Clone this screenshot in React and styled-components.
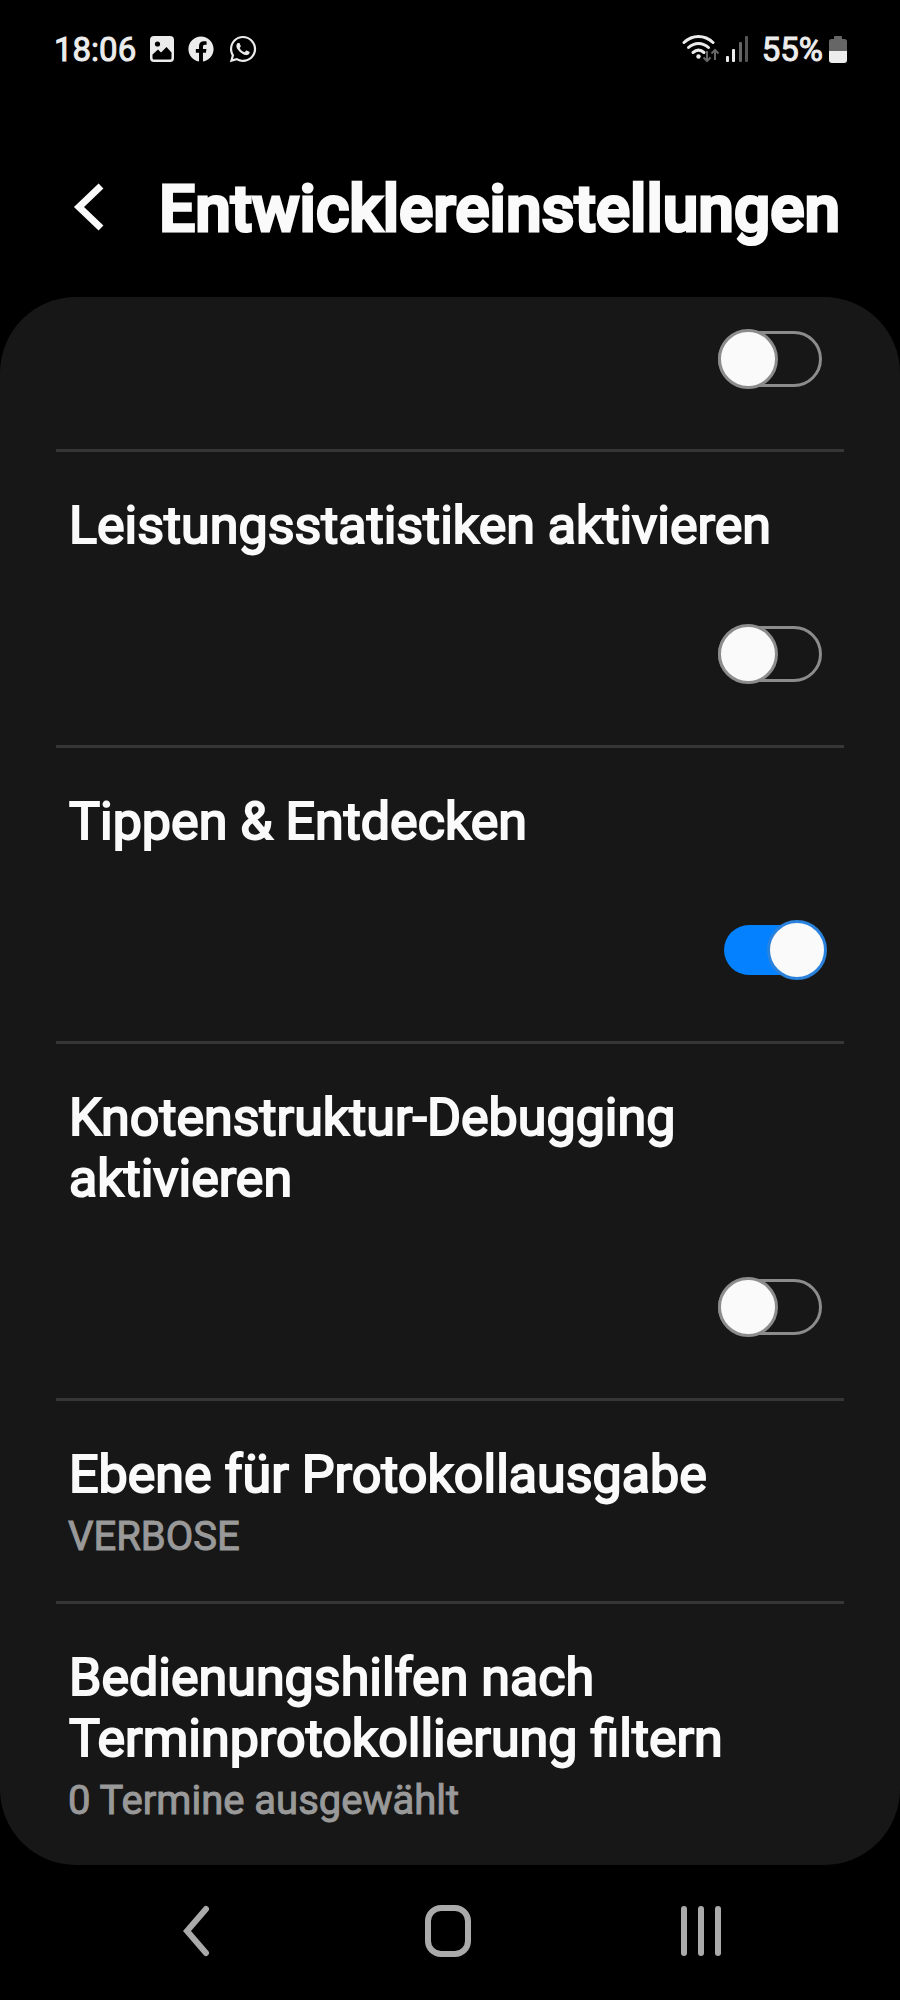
import React, { useState } from "react";
import styled, { createGlobalStyle } from "styled-components";
import { FaFacebook, FaWhatsapp } from "react-icons/fa";

const GlobalStyle = createGlobalStyle`
  *,
  *::before,
  *::after {
    box-sizing: border-box;
  }
  body {
    margin: 0;
    background-color: #000;
    color: #fafafa;
    font-family: Roboto, "Liberation Sans", sans-serif;
  }
`;
const Page = styled.div`
  min-height: 100vh;
  display: flex;
  flex-direction: column;
`;
const StatusBar = styled.div`
  display: flex;
  justify-content: space-between;
  align-items: center;
  height: 98px;
  padding: 0 53px 0 54px;
  color: #ececec;
  font-size: 33px;
  -webkit-text-stroke: 1px #ececec;
`;
const StatusGroup = styled.div`
  display: flex;
  align-items: center;
  gap: ${(props) => props.$gap}px;
  svg {
    flex: none;
  }
`;
const Header = styled.header`
  display: flex;
  align-items: center;
  gap: 53px;
  height: 199px;
  padding: 20px 56px 0 72px;
  h1 {
    margin: 4px 0 0;
    font-size: 64px;
    font-weight: 500;
    line-height: 78px;
    -webkit-text-stroke: 3px #fafafa;
  }
`;
const IconButton = styled.button`
  display: flex;
  padding: 0;
  border: none;
  background: none;
  color: inherit;
  cursor: pointer;
`;
const Card = styled.main`
  padding: 0 56px;
  background-color: #171717;
  border-radius: 76px;
  overflow: hidden;
`;
const Row = styled.div`
  display: flex;
  flex-direction: column;
  padding: ${(props) => (props.$cut ? "32px 12px 60px" : "43px 12px 61px")};
  border-bottom: 3px solid #363636;
`;
const LinkRow = styled.button`
  display: block;
  width: 100%;
  padding: 43px 12px 41px;
  border: none;
  border-bottom: 3px solid #363636;
  background: none;
  color: inherit;
  font-family: inherit;
  text-align: left;
  cursor: pointer;
  &:last-child {
    border-bottom: none;
  }
`;
const titleStyle = `
  display: block;
  padding-left: 1px;
  font-size: 52px;
  font-weight: 400;
  line-height: 61px;
  -webkit-text-stroke: 2px #fafafa;
`;
const Label = styled.label`
  ${titleStyle}
  margin-bottom: 68px;
`;
const Title = styled.span`
  ${titleStyle}
`;
const Summary = styled.span`
  display: block;
  margin-top: 8px;
  color: #999;
  font-size: 40px;
  line-height: 47px;
  -webkit-text-stroke: 1px #999;
`;
const Switch = styled.input`
  appearance: none;
  position: relative;
  align-self: flex-end;
  width: 109px;
  height: 60px;
  margin: 0 5px 0 0;
  padding: 2px 5px 2px 0;
  cursor: pointer;
  &::before {
    content: "";
    display: block;
    height: 56px;
    border: 3px solid #8c8c8c;
    border-radius: 28px;
  }
  &::after {
    content: "";
    position: absolute;
    top: 0;
    left: 0;
    width: 60px;
    height: 60px;
    border: 3px solid #8c8c8c;
    border-radius: 50%;
    background-color: #fafafa;
  }
  &:checked {
    padding: 5px 3px 5px 6px;
  }
  &:checked::before {
    height: 50px;
    border: none;
    background-color: #0381fe;
  }
  &:checked::after {
    left: auto;
    right: 0;
    border-color: #2a82dc;
  }
`;
const NavBar = styled.nav`
  display: grid;
  grid-template-columns: repeat(3, 1fr);
  justify-items: center;
  align-items: center;
  flex: 1;
  padding: 0 73px 4px 69px;
  color: #aaa;
`;

const switches = [
  { id: "stats", text: "Leistungsstatistiken aktivieren" },
  { id: "explore", text: "Tippen & Entdecken" },
  { id: "nodes", text: "Knotenstruktur-Debugging aktivieren" },
];

const PictureIcon = () => (
  <svg width="24" height="26" viewBox="0 0 24 26">
    <rect width="24" height="26" rx="4" fill="currentColor" />
    <circle cx="7.5" cy="8" r="2.6" fill="#000" />
    <path
      d="M2.5 18.5L8 13.5l3 3 5.5-5.5 5 5.5V22a1.5 1.5 0 0 1-1.5 1.5H4A1.5 1.5 0 0 1 2.5 22z"
      fill="#000"
    />
  </svg>
);

const WifiIcon = () => (
  <svg width="38" height="30" viewBox="0 0 38 30" fill="none">
    <g stroke="currentColor" strokeWidth="3" strokeLinecap="round">
      <path d="M2 8.5C10.5 .5 22.5 .5 31 8.5" />
      <path d="M6.5 13.5c6-5.5 14-5.5 20 0" />
      <path d="M11 18.5c3.5-3 7.5-3 11 0" />
    </g>
    <circle cx="16.5" cy="22.5" r="2.2" fill="currentColor" />
    <path
      d="M25 17v9.500M21.500 23.500l3.500 3.500 3.500-3.500M33 26v-9.500M29.500 19.500l3.500-3.500 3.500 3.500"
      stroke="#666"
      strokeWidth="2"
    />
  </svg>
);

const SignalIcon = () => (
  <svg width="30" height="26" viewBox="0 0 30 26">
    <rect x="0" y="20" width="3" height="6" rx="1" fill="currentColor" />
    <rect x="6" y="13" width="3" height="13" rx="1" fill="currentColor" />
    <rect x="13" y="6" width="3" height="20" rx="1" fill="#666" />
    <rect x="19" y="0" width="3" height="26" rx="1" fill="#555" />
  </svg>
);

const BatteryIcon = () => (
  <svg width="18" height="27" viewBox="0 0 18 27">
    <path
      d="M5 1a1 1 0 0 1 1-1h6a1 1 0 0 1 1 1v2h2.5A2.5 2.5 0 0 1 18 5.5V16H0V5.5A2.5 2.5 0 0 1 2.5 3H5z"
      fill="#666"
    />
    <path d="M0 15h18v9a3 3 0 0 1-3 3H3a3 3 0 0 1-3-3z" fill="currentColor" />
  </svg>
);

export default function App() {
  const [checked, setChecked] = useState({
    top: false,
    stats: false,
    explore: true,
    nodes: false,
  });

  const handleChange = (e) => {
    setChecked({
      ...checked,
      [e.target.name]: e.target.checked,
    });
  };

  return (
    <Page>
      <GlobalStyle />
      <StatusBar>
        <StatusGroup $gap={14}>
          <span>18:06</span>
          <PictureIcon />
          <FaFacebook size={26} />
          <FaWhatsapp size={30} />
        </StatusGroup>
        <StatusGroup $gap={6}>
          <WifiIcon />
          <SignalIcon />
          <span>55%</span>
          <BatteryIcon />
        </StatusGroup>
      </StatusBar>
      <Header>
        <IconButton aria-label="Zurück">
          <svg width="34" height="50" viewBox="0 0 34 50" fill="none">
            <path d="M29 3L7 24l22 21" stroke="currentColor" strokeWidth="7" />
          </svg>
        </IconButton>
        <h1>Entwicklereinstellungen</h1>
      </Header>
      <Card>
        <Row $cut>
          <Switch
            type="checkbox"
            role="switch"
            aria-label="Option"
            name="top"
            checked={checked["top"]}
            onChange={handleChange}
          />
        </Row>
        {switches.map((item) => (
          <Row key={item.id}>
            <Label htmlFor={item.id}>{item.text}</Label>
            <Switch
              type="checkbox"
              role="switch"
              id={item.id}
              name={item.id}
              checked={checked[item.id]}
              onChange={handleChange}
            />
          </Row>
        ))}
        <LinkRow>
          <Title>Ebene für Protokollausgabe</Title>
          <Summary>VERBOSE</Summary>
        </LinkRow>
        <LinkRow>
          <Title>Bedienungshilfen nach Terminprotokollierung filtern</Title>
          <Summary>0 Termine ausgewählt</Summary>
        </LinkRow>
      </Card>
      <NavBar>
        <IconButton aria-label="Zurück">
          <svg width="30" height="52" viewBox="0 0 30 52" fill="none">
            <path
              d="M26 4L7 26l19 22"
              stroke="currentColor"
              strokeWidth="6"
              strokeLinecap="round"
            />
          </svg>
        </IconButton>
        <IconButton aria-label="Startseite">
          <svg width="46" height="52" viewBox="0 0 46 52" fill="none">
            <rect
              x="3"
              y="3"
              width="40"
              height="46"
              rx="13"
              stroke="currentColor"
              strokeWidth="6"
            />
          </svg>
        </IconButton>
        <IconButton aria-label="Letzte Apps">
          <svg width="40" height="50" viewBox="0 0 40 50" fill="currentColor">
            <rect x="0" y="0" width="6" height="50" rx="3" />
            <rect x="17" y="0" width="6" height="50" rx="3" />
            <rect x="34" y="0" width="6" height="50" rx="3" />
          </svg>
        </IconButton>
      </NavBar>
    </Page>
  );
}
